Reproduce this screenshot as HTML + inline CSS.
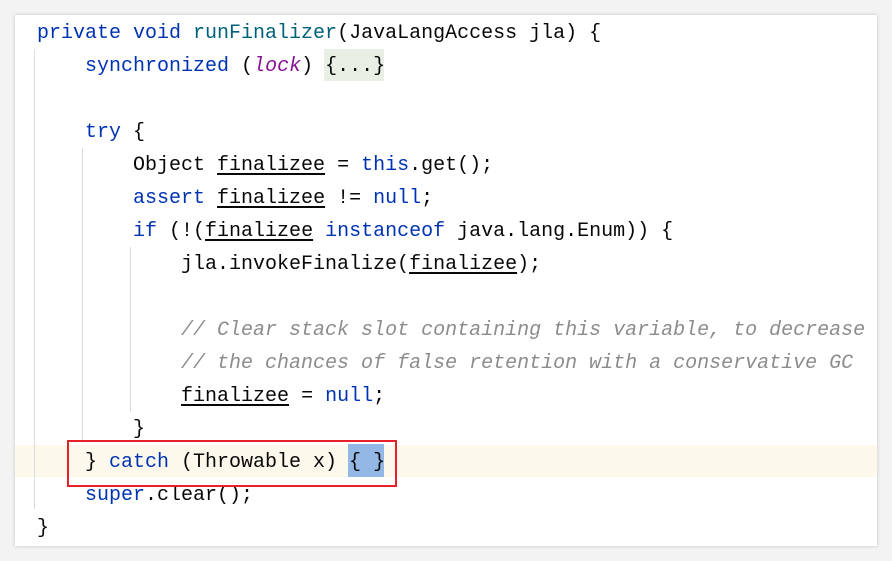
<!DOCTYPE html>
<html><head><style>
body{margin:0;width:892px;height:561px;background:#f3f3f3;position:relative;overflow:hidden}
.card{position:absolute;left:15px;top:15px;width:862px;height:531px;background:#fff;box-shadow:0 0 4px rgba(0,0,0,.18)}
.ln{position:absolute;left:37px;height:33px;line-height:33px;font-family:"Liberation Mono",monospace;font-size:20px;color:#080808;white-space:pre;margin-top:1px}
.k{color:#0033b3}.f{color:#00627a}.p{color:#871094;font-style:italic}.c{color:#8c8c8c;font-style:italic}.u{text-decoration:underline;text-underline-offset:3px}
.g{position:absolute;width:1px;background:#dcdcdc}
</style></head><body>
<div class="card"></div>
<div style="position:absolute;left:15px;top:445px;width:862px;height:32px;background:#fcf8ec"></div>
<div style="position:absolute;left:324px;top:49px;width:60px;height:32px;background:#e8efe5"></div>
<div style="position:absolute;left:348px;top:444px;width:36px;height:33px;background:#93b8e6"></div>
<div class="g" style="left:34px;top:49px;height:460px"></div>
<div class="g" style="left:82px;top:148px;height:295px"></div>
<div class="g" style="left:130px;top:247px;height:165px"></div>
<div class="ln" style="top:16px"><span class="k">private void </span><span class="f">runFinalizer</span>(JavaLangAccess jla) {</div>
<div class="ln" style="top:49px">    <span class="k">synchronized</span> (<span class="p">lock</span>) {...}</div>
<div class="ln" style="top:115px">    <span class="k">try</span> {</div>
<div class="ln" style="top:148px">        Object <span class="u">finalizee</span> = <span class="k">this</span>.get();</div>
<div class="ln" style="top:181px">        <span class="k">assert</span> <span class="u">finalizee</span> != <span class="k">null</span>;</div>
<div class="ln" style="top:214px">        <span class="k">if</span> (!(<span class="u">finalizee</span> <span class="k">instanceof</span> java.lang.Enum)) {</div>
<div class="ln" style="top:247px">            jla.invokeFinalize(<span class="u">finalizee</span>);</div>
<div class="ln" style="top:313px">            <span class="c">// Clear stack slot containing this variable, to decrease</span></div>
<div class="ln" style="top:346px">            <span class="c">// the chances of false retention with a conservative GC</span></div>
<div class="ln" style="top:379px">            <span class="u">finalizee</span> = <span class="k">null</span>;</div>
<div class="ln" style="top:412px">        }</div>
<div class="ln" style="top:445px">    } <span class="k">catch</span> (Throwable x) { }</div>
<div class="ln" style="top:478px">    <span class="k">super</span>.clear();</div>
<div class="ln" style="top:511px">}</div>
<div style="position:absolute;left:67px;top:440px;width:326px;height:43px;border:2px solid #e8202a"></div>
</body></html>
